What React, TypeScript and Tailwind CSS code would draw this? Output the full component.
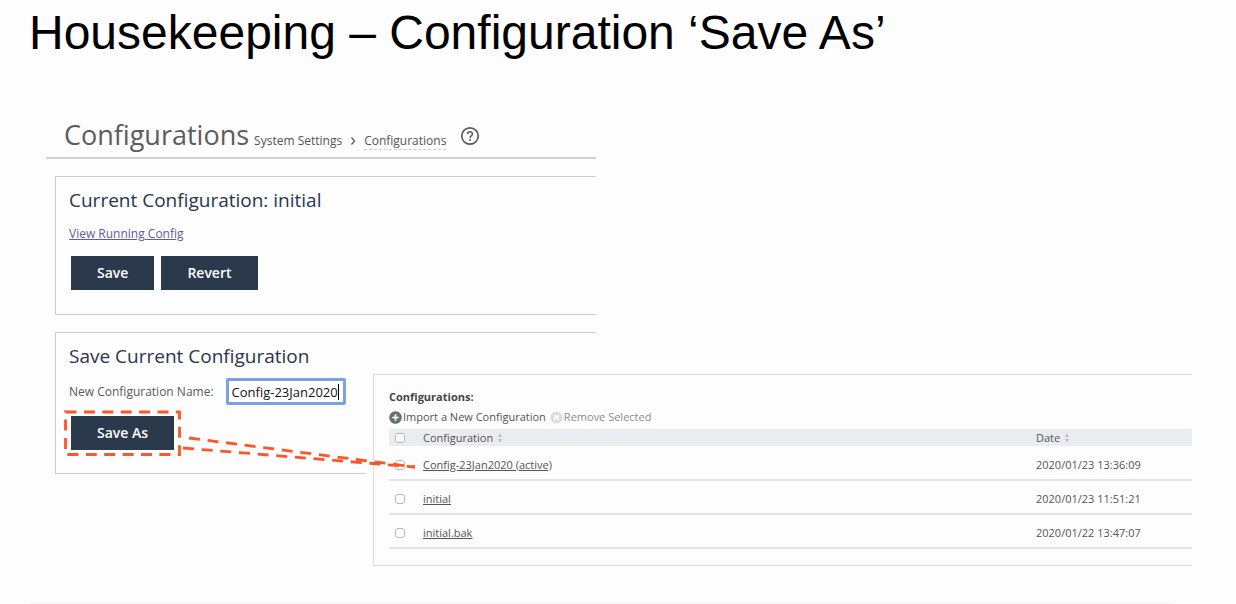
import React, { useState } from "react";

type Row = { name: string; date: string };

const rows: Row[] = [
  { name: "Config-23Jan2020 (active)", date: "2020/01/23 13:36:09" },
  { name: "initial", date: "2020/01/23 11:51:21" },
  { name: "initial.bak", date: "2020/01/22 13:47:07" },
];

const checkbox =
  "block h-[10px] w-[10px] appearance-none rounded-[3px] border border-[#b8b8b8] bg-white checked:bg-[#2b394d]";

function SortIcon() {
  return (
    <svg viewBox="0 0 6 10" className="h-[10px] w-[6px]" fill="#b9bcc0" aria-hidden="true">
      <path d="M3 0.5 5 4H1z" />
      <path d="M3 9.5 5 6H1z" />
    </svg>
  );
}

function DarkButton({ children }: { children: React.ReactNode }) {
  return (
    <button
      type="button"
      className="h-[34px] bg-[#2b394d] px-[26px] text-[14px] leading-5 font-semibold text-white"
    >
      {children}
    </button>
  );
}

function SaveAsCallout() {
  return (
    <svg
      viewBox="0 0 360 64"
      className="pointer-events-none absolute -top-[9px] -left-[10px] z-10 h-[64px] w-[360px] max-w-none"
      fill="none"
      stroke="#fc5528"
      strokeWidth="2.8"
      aria-hidden="true"
    >
      <path d="M4.5 5H118.500V47.500H4.500Z" strokeDasharray="11 7.4" />
      <path d="M128 31 354 60" strokeDasharray="11 7.7" />
      <path d="M122 41 354 60" strokeDasharray="11 7.7" />
    </svg>
  );
}

function ConfigurationSettings() {
  const [name, setName] = useState("Config-23Jan2020");
  return (
    <section className="col-span-2 col-start-1 row-start-1">
      <header className="flex h-[42px] items-baseline border-b-2 border-[#cfcfcf] pl-[18px] text-[12px] leading-5 text-[#555]">
        <h2 className="text-[27px] leading-9 text-[#5c5c5c]">Configurations</h2>
        <nav aria-label="Breadcrumb" className="flex items-baseline gap-2 pl-[5px]">
          <span>System Settings</span>
          <svg viewBox="0 0 6 8" className="h-2 w-[6px]" fill="none" stroke="#555" strokeWidth="1.2" aria-hidden="true">
            <path d="M1.5 0.5 4.5 4 1.5 7.5" />
          </svg>
          <a href="#configurations" className="border-b border-dashed border-[#ccc] leading-4">
            Configurations
          </a>
        </nav>
        <button type="button" aria-label="Help" className="ml-[14px] self-start pt-[9px]">
          <svg viewBox="0 0 20 20" className="h-5 w-5" fill="none" stroke="#5c5c5c" aria-hidden="true">
            <circle cx="10" cy="10" r="8.2" strokeWidth="1.7" />
            <path d="M7.6 8.2C7.6 6.6 8.6 5.7 10 5.7s2.4.9 2.4 2.2c0 1.9-2.4 2-2.4 4" strokeWidth="1.5" />
            <circle cx="10" cy="14" r="1" fill="#5c5c5c" stroke="none" />
          </svg>
        </button>
      </header>

      <div className="mt-[17px] ml-[9px] h-[139px] border border-r-0 border-[#cccdd0] pt-[9px] pl-[13px]">
        <h3 className="text-[19px] leading-7 text-[#2b3550]">Current Configuration: initial</h3>
        <a href="#running" className="mt-[10px] block w-fit text-[12px] leading-5 text-[#665a9c] underline">
          View Running Config
        </a>
        <div className="mt-3 ml-[2px] flex gap-[7px]">
          <DarkButton>Save</DarkButton>
          <DarkButton>Revert</DarkButton>
        </div>
      </div>

      <div className="mt-[17px] ml-[9px] h-[142px] border border-r-0 border-[#cccdd0] pt-[9px] pl-[13px]">
        <h3 className="text-[19px] leading-7 text-[#2b3550]">Save Current Configuration</h3>
        <div className="mt-2 flex items-center gap-3 text-[12px] leading-5 text-[#5a5a5a]">
          <label htmlFor="config-name">New Configuration Name:</label>
          <div className="relative">
            <input
              id="config-name"
              value={name}
              onChange={(e) => setName(e.target.value)}
              className="block h-[27px] w-[120px] rounded-[2px] border-3 border-[#7ba0ea] bg-white px-[3px] text-[13px] text-[#111] outline-none"
            />
            <span className="absolute top-[6px] right-[7px] h-4 w-px bg-black" aria-hidden="true" />
          </div>
        </div>
        <div className="relative mt-[11px] ml-[2px] flex">
          <DarkButton>Save As</DarkButton>
          <SaveAsCallout />
        </div>
      </div>
    </section>
  );
}

function ConfigurationList() {
  return (
    <section className="z-0 col-span-2 col-start-2 row-start-1 mt-[248px] bg-[#fdfdfd] pt-[9px] pl-[7px]">
      <div className="border border-r-0 border-[#dcdcdf] pt-[14px] pb-[16px] pl-[15px] text-[11px] leading-4 text-[#555]">
        <h3 className="font-bold text-[#444]">Configurations:</h3>
        <div className="mt-1 flex items-center gap-1">
          <button type="button" className="flex items-center gap-px">
            <svg viewBox="0 0 12 12" className="h-[13px] w-[13px]" aria-hidden="true">
              <circle cx="6" cy="6" r="5.8" fill="#68706f" />
              <path d="M6 3v6M3 6h6" stroke="#fff" strokeWidth="1.6" />
            </svg>
            Import a New Configuration
          </button>
          <button type="button" className="flex items-center gap-px text-[#8c8c8c]">
            <svg viewBox="0 0 12 12" className="h-[13px] w-[13px]" aria-hidden="true">
              <circle cx="6" cy="6" r="5.5" fill="#dcdcdc" />
              <path d="M4 4l4 4M8 4l-4 4" stroke="#fff" strokeWidth="1.6" />
            </svg>
            Remove Selected
          </button>
        </div>
        <table className="mt-1 w-full table-fixed border-collapse text-left">
          <thead>
            <tr className="h-[17px] bg-[#eaecf1]">
              <th className="w-[34px] pl-[6px]">
                <input type="checkbox" aria-label="Select all" className={checkbox} />
              </th>
              <th className="font-normal">
                <span className="flex items-center gap-1">Configuration <SortIcon /></span>
              </th>
              <th className="w-[156px] font-normal">
                <span className="flex items-center gap-1">Date <SortIcon /></span>
              </th>
            </tr>
          </thead>
          <tbody>
            {rows.map((row) => (
              <tr key={row.name} className="h-[34px] border-b-2 border-[#e2e3e5]">
                <td className="pt-1 pl-[6px]">
                  <input type="checkbox" aria-label={row.name} className={checkbox} />
                </td>
                <td className="pt-1">
                  <a href="#config" className="underline">{row.name}</a>
                </td>
                <td className="pt-1">{row.date}</td>
              </tr>
            ))}
          </tbody>
        </table>
      </div>
    </section>
  );
}

export default function App() {
  return (
    <div className="flex min-h-screen flex-col bg-[#fdfdfd] font-['Open_Sans','Noto_Sans',sans-serif]">
      <h1 className="pt-[5px] pl-[29px] font-['Liberation_Sans',Arial,sans-serif] text-[48px] leading-[56px] text-black">
        Housekeeping – Configuration ‘Save As’
      </h1>
      <main className="mt-[56px] mr-[44px] ml-[46px] grid grid-cols-[320px_230px_1fr] items-start">
        <ConfigurationSettings />
        <ConfigurationList />
      </main>
      <hr className="mt-auto mr-[62px] ml-[31px] border-[#f3f3f3]" />
    </div>
  );
}
